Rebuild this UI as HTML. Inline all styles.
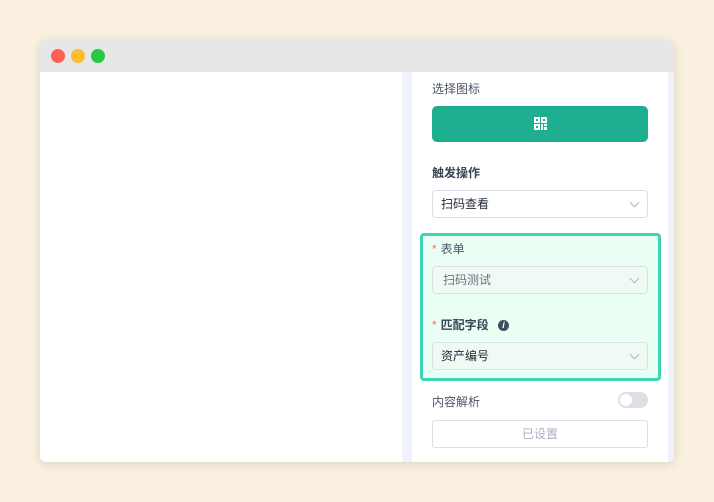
<!DOCTYPE html>
<html><head><meta charset="utf-8"><style>
*{margin:0;padding:0;box-sizing:border-box}
body{width:714px;height:502px;background:#f9f0df;font-family:"Liberation Sans","Noto Sans CJK SC",sans-serif;position:relative;overflow:hidden}
.win{position:absolute;left:40px;top:40px;width:634px;height:422px;background:#fff;border-radius:6px;overflow:hidden;box-shadow:0 2px 10px rgba(0,0,0,.12)}
.title{position:absolute;left:0;top:0;width:634px;height:32px;background:#e7e7e7}
.dot{position:absolute;top:9px;width:14px;height:14px;border-radius:50%}
.strip{position:absolute;top:32px;bottom:0;background:#f0f3fb}
.abs{position:absolute}
.lbl{position:absolute;font-size:12px;color:#4b5566}
.sel{position:absolute;left:392px;width:216px;height:28px;border:1px solid #dcdfe6;border-radius:4px;background:#fff;font-size:12px;color:#1f2937;padding-left:8px;line-height:26px}
.chev{position:absolute;right:9px;top:8px;width:7px;height:7px;border-right:1px solid #b0b5be;border-bottom:1px solid #b0b5be;transform:rotate(45deg)}
.star{color:#f56c6c;margin-right:4px}
</style></head><body>
<div class="win">
<div class="title"></div>
<div class="dot" style="left:11px;background:#fe5f57"></div>
<div class="dot" style="left:31px;background:#febc2e"></div>
<div class="dot" style="left:51px;background:#28c840"></div>
<div class="strip" style="left:362px;width:10px"></div>
<div class="strip" style="left:628px;width:6px"></div>
<div class="lbl" style="left:392px;top:40px">选择图标</div>
<div class="abs" style="left:392px;top:66px;width:216px;height:36px;background:#1eae90;border-radius:5px">
<svg class="abs" style="left:101px;top:10px" width="15" height="15" viewBox="0 0 15 15" fill="#fff"><path fill-rule="evenodd" d="M1 1h6v6H1zM3 3v2h2V3zM8 1h6v6H8zM10 3v2h2V3zM1 8h6v6H1zM3 10v2h2v-2z"/><path d="M8 8h2v6H8zM11 8h3v2h-3zM11 11h3v3h-3z"/></svg>
</div>
<div class="lbl" style="left:392px;top:124px;font-weight:bold;color:#3b4455">触发操作</div>
<div class="sel" style="top:150px">扫码查看<span class="chev"></span></div>
<div class="abs" style="left:380px;top:193px;width:241px;height:148px;background:#eafff4;border:3px solid #3dd5b6;border-radius:4px"></div>
<div class="lbl" style="left:392px;top:200px"><span class="star">*</span>表单</div>
<div class="sel" style="top:226px;background:#eefaf3;color:#6b7280;padding-left:10px">扫码测试<span class="chev"></span></div>
<div class="lbl" style="left:392px;top:276px;font-weight:bold;color:#3b4455"><span class="star" style="font-weight:normal">*</span>匹配字段 <span style="display:inline-block;width:11px;height:11px;border-radius:50%;background:#3f4d60;color:#fff;font-size:9px;line-height:11px;text-align:center;font-style:italic;margin-left:6px;vertical-align:1px">i</span></div>
<div class="sel" style="top:302px;background:#eefaf3">资产编号<span class="chev"></span></div>
<div class="lbl" style="left:392px;top:353px">内容解析</div>
<div class="abs" style="left:578px;top:352px;width:30px;height:16px;border-radius:8px;background:#dcdfe6"><div class="abs" style="left:2px;top:2px;width:12px;height:12px;border-radius:50%;background:#fff"></div></div>
<div class="abs" style="left:392px;top:380px;width:216px;height:28px;border:1px solid #dcdfe6;border-radius:3px;text-align:center;line-height:26px;font-size:12px;color:#a8b1c2">已设置</div>
</div>
</body></html>
